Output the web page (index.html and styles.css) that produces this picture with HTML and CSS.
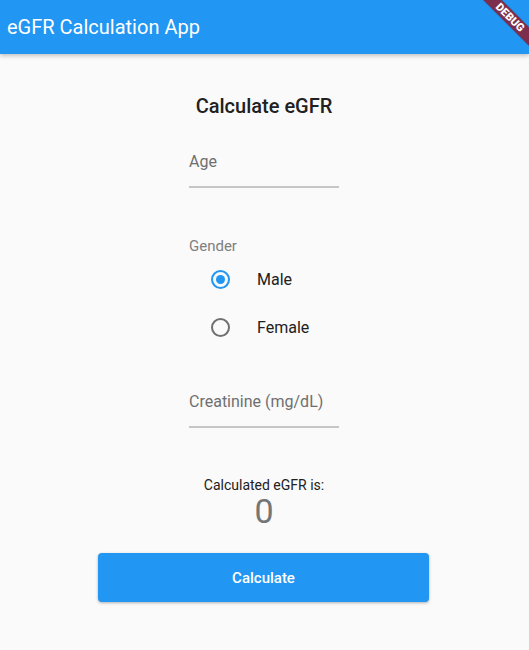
FILE: index.html
```html
<!DOCTYPE html>
<html lang="en">
<head>
<meta charset="utf-8">
<title>eGFR Calculation App</title>
<link rel="stylesheet" href="styles.css">
</head>
<body>
<header class="appbar">
  <span class="appbar-title">eGFR Calculation App</span>
  <div class="debug-banner">DEBUG</div>
</header>
<main class="content">
  <h1 class="heading">Calculate eGFR</h1>
  <div class="field field-age">
    <div class="field-label">Age</div>
    <div class="field-line"></div>
  </div>
  <div class="gender">
    <div class="gender-label">Gender</div>
    <div class="radio-row">
      <span class="radio radio-on"><span class="radio-dot"></span></span>
      <span class="radio-text">Male</span>
    </div>
    <div class="radio-row">
      <span class="radio"></span>
      <span class="radio-text">Female</span>
    </div>
  </div>
  <div class="field field-creat">
    <div class="field-label">Creatinine (mg/dL)</div>
    <div class="field-line"></div>
  </div>
  <div class="result-label">Calculated eGFR is:</div>
  <div class="result-value">0</div>
  <button class="calc-btn" type="button">Calculate</button>
</main>
</body>
</html>
```

FILE: styles.css
```css
html, body {
  margin: 0;
  padding: 0;
}
body {
  background: #fafafa;
  font-family: Roboto, "Liberation Sans", Arial, sans-serif;
  color: #212121;
  height: 650px;
  overflow: hidden;
}
.appbar {
  position: relative;
  height: 54px;
  background: #2196f3;
  box-shadow: 0 2px 4px rgba(0, 0, 0, 0.22);
  display: flex;
  align-items: center;
  padding-left: 7px;
  overflow: hidden;
  z-index: 1;
}
.appbar-title {
  color: #ffffff;
  font-size: 20px;
  line-height: 54px;
  font-weight: 400;
}
.debug-banner {
  position: absolute;
  width: 80px;
  height: 13px;
  left: 470px;
  top: 11px;
  transform: rotate(45deg);
  background: #7d2e4c;
  color: #ffffff;
  font-size: 11px;
  font-weight: 900;
  line-height: 13px;
  text-align: center;
  box-shadow: 0 0 1px rgba(0, 0, 0, 0.3);
}
.content {
  display: flex;
  flex-direction: column;
  align-items: center;
  padding-top: 40px;
  padding-right: 1px;
}
.heading {
  margin: 0;
  font-size: 20px;
  line-height: 24px;
  font-weight: 500;
  color: #212121;
}
.field {
  width: 150px;
}
.field-age {
  margin-top: 34px;
}
.field-creat {
  margin-top: 41px;
}
.field-label {
  font-size: 16px;
  line-height: 19px;
  color: #6f6f6f;
  margin-bottom: 15px;
}
.field-line {
  height: 2px;
  background: #c6c6c6;
}
.gender {
  width: 150px;
  margin-top: 49px;
}
.gender-label {
  font-size: 15px;
  line-height: 18px;
  color: #808080;
}
.radio-row {
  display: flex;
  align-items: center;
  height: 48px;
  padding-left: 22px;
  gap: 27px;
}
.radio {
  box-sizing: border-box;
  width: 19px;
  height: 19px;
  border: 2px solid #707070;
  border-radius: 50%;
  display: flex;
  align-items: center;
  justify-content: center;
  flex: none;
}
.radio-on {
  border-color: #2196f3;
}
.radio-dot {
  width: 9px;
  height: 9px;
  border-radius: 50%;
  background: #2196f3;
}
.radio-text {
  font-size: 16px;
  line-height: 19px;
  color: #212121;
}
.result-label {
  margin-top: 49px;
  font-size: 14px;
  line-height: 17px;
  color: #212121;
}
.result-value {
  font-size: 34px;
  line-height: 34px;
  color: #757575;
}
.calc-btn {
  margin-top: 25px;
  margin-right: 1px;
  width: 331px;
  height: 49px;
  border: none;
  border-radius: 4px;
  background: #2196f3;
  color: #ffffff;
  font-family: Roboto, "Liberation Sans", Arial, sans-serif;
  font-size: 15px;
  font-weight: 500;
  box-shadow: 0 1px 3px rgba(0, 0, 0, 0.3);
  padding: 0;
}
```
